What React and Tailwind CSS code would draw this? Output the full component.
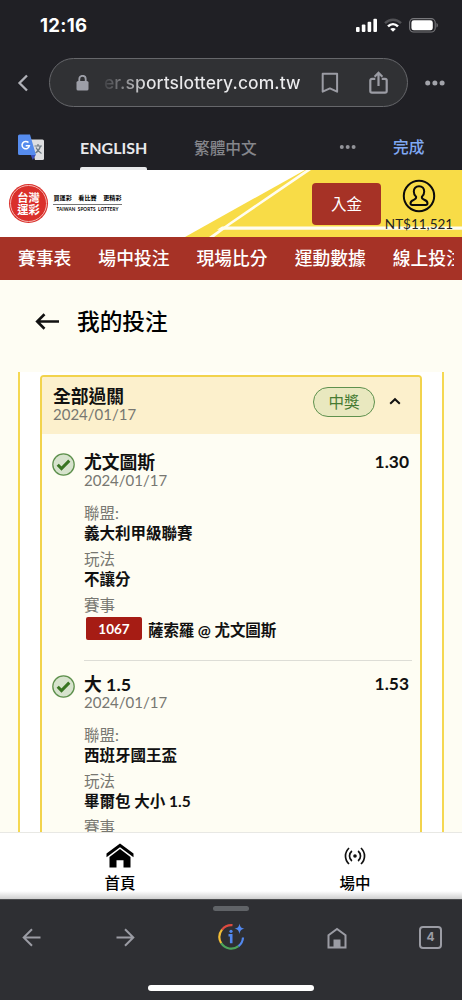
const navItems = ["賽事表", "場中投注", "現場比分", "運動數據", "線上投注"];

const bets = [
  {
    pick: "尤文圖斯",
    odds: "1.30",
    date: "2024/01/17",
    league: "義大利甲級聯賽",
    market: "不讓分",
    code: "1067",
    match: "薩索羅 @ 尤文圖斯",
  },
  {
    pick: "大 1.5",
    odds: "1.53",
    date: "2024/01/17",
    league: "西班牙國王盃",
    market: "畢爾包 大小 1.5",
  },
];

const StatusBar = () => (
  <div className="flex h-[58px] items-start justify-between pl-[40px] pr-[23px] font-['Inter']">
    <div className="mt-[13px] text-[18.5px] font-bold leading-[24px] tracking-[0.3px] text-white">
      12:16
    </div>
    <div className="mt-[18px] flex items-start">
      <svg width="22" height="15" viewBox="0 0 22 15" fill="#fff">
        <rect x="0" y="9" width="3.6" height="5" rx="1" />
        <rect x="5.8" y="6.6" width="3.6" height="7.4" rx="1" />
        <rect x="11.6" y="3.8" width="3.6" height="10.2" rx="1" />
        <rect x="17.4" y="0.8" width="3.6" height="13.2" rx="1" />
      </svg>
      <svg className="ml-[6px]" width="18" height="15" viewBox="0 0 18 15" fill="none">
        <path d="M1 5.2C5.6.5 12.4.5 17 5.2" stroke="#515155" strokeWidth="2.4" />
        <path d="M4 8.4c3-3 7-3 10 0" stroke="#fff" strokeWidth="2.5" />
        <path d="M9 13.8 6.2 11c1.6-1.5 4-1.5 5.6 0z" fill="#fff" />
      </svg>
      <svg className="ml-[7px]" width="30" height="15" viewBox="0 0 30 15" fill="none">
        <rect x="0.6" y="0.6" width="25.6" height="13.4" rx="4" stroke="#77777b" strokeWidth="1.1" />
        <rect x="2.4" y="2.3" width="21.4" height="10" rx="2.4" fill="#fff" />
        <path d="M27.5 5v4.6c1.8-.7 1.8-3.9 0-4.6z" fill="#77777b" />
      </svg>
    </div>
  </div>
);

const AddressBar = () => (
  <div className="flex h-[49px] items-center">
    <svg className="ml-[17px]" width="13" height="18" viewBox="0 0 13 18" fill="none">
      <path d="M10 1.5 2.5 9 10 16.5" stroke="#b0b1b8" strokeWidth="2.3" />
    </svg>
    <div className="ml-[19px] flex h-[49px] w-[359px] items-center rounded-full border border-[#66676b] bg-[#303134]">
      <svg className="ml-[26px]" width="13" height="16" viewBox="0 0 13 16" fill="none">
        <rect x="0.5" y="6" width="12" height="9.5" rx="1.6" fill="#9d9fa8" />
        <path d="M3.3 7V4a3.2 3.2 0 0 1 6.4 0v3" stroke="#9d9fa8" strokeWidth="1.8" />
      </svg>
      <div className="ml-[15px] w-[199px] overflow-hidden whitespace-nowrap bg-linear-to-r from-[#404145] via-[#e8e8ea] via-22% to-[#ededef] bg-clip-text font-['Inter'] text-[17.5px] font-medium leading-[24px] tracking-[0.08px] text-transparent">
        er.sportslottery.com.tw
      </div>
      <svg className="ml-[18px]" width="18" height="22" viewBox="0 0 18 22" fill="none">
        <path d="M1.7 1.7h14.4v18L8.9 16.4 1.7 19.7z" stroke="#9b9ca4" strokeWidth="2" strokeLinejoin="round" />
      </svg>
      <svg className="ml-[30px]" width="19" height="23" viewBox="0 0 19 23" fill="none" stroke="#9b9ca4" strokeWidth="2.2">
        <path d="M6.3 7.9H3A1.7 1.7 0 0 0 1.3 9.6V20A1.7 1.7 0 0 0 3 21.7h13a1.7 1.7 0 0 0 1.7-1.7V9.6A1.7 1.7 0 0 0 16 7.9h-3.3" />
        <path d="M9.5 15V2M5.6 5.7 9.5 1.8l3.9 3.9" />
      </svg>
    </div>
    <svg className="ml-[17px]" width="20" height="6" viewBox="0 0 20 6" fill="#a2a3aa">
      <circle cx="2.7" cy="3" r="2.5" />
      <circle cx="9.9" cy="3" r="2.5" />
      <circle cx="17.1" cy="3" r="2.5" />
    </svg>
  </div>
);

const TranslateBar = () => (
  <div className="flex h-[63px]">
    <svg className="ml-[18px] mt-[27px]" width="27" height="27" viewBox="0 0 27 27">
      <path d="M12 5.5h12.5A1.5 1.5 0 0 1 26 7v17.5a1.5 1.5 0 0 1-1.5 1.5H17z" fill="#dedfe1" />
      <path d="M12.5 20.5H18L14.8 26z" fill="#3b50bd" />
      <path d="M1.5.5H12l6 20.5H1.5A1.5 1.5 0 0 1 0 19.5V2A1.5 1.5 0 0 1 1.5.5z" fill="#568cee" />
      <path d="M10.5 8.6a3.7 3.7 0 1 0 .9 3.1H7.7" fill="none" stroke="#fff" strokeWidth="1.5" />
      <path d="M16.5 12h7.5M20 10v2M22.5 12c-.7 3-2.7 5.5-5 7M18 13.5c1 2.5 3 4.5 5.5 6" fill="none" stroke="#6e7b83" strokeWidth="1.2" />
    </svg>
    <div className="ml-[35px] flex w-[67px] flex-col justify-between">
      <div className="mt-[29px] whitespace-nowrap font-['Lato'] text-[16px] font-bold leading-[24px] text-[#e8e9eb]">
        ENGLISH
      </div>
      <div className="h-[3px] rounded-t-[2px] bg-[#e8e9eb]" />
    </div>
    <div className="ml-[47px] mt-[29px] w-[64px] whitespace-nowrap text-[15.7px] font-medium leading-[24px] text-[#85868b]">
      繁體中文
    </div>
    <svg className="ml-[81px] mt-[37px]" width="17" height="6" viewBox="0 0 17 6" fill="#929399">
      <circle cx="2.8" cy="3" r="2" />
      <circle cx="8.7" cy="3" r="2" />
      <circle cx="14.6" cy="3" r="2" />
    </svg>
    <div className="ml-[37px] mt-[28px] text-[15.7px] font-medium leading-[24px] text-[#80a9f4]">
      完成
    </div>
  </div>
);

const SiteHeader = () => (
  <header className="relative flex h-[67px] bg-white">
    {/* Yellow corner with thin white stripes */}
    <svg className="absolute right-0 top-0" width="282" height="67" viewBox="180 0 282 67">
      <path d="M185 67 305 0h157v67z" fill="#f8dc47" />
      <path d="M209 67 231 51.5 306 0h5L231 54.5 214 67z" fill="#fffdf0" />
      <path d="M222 56.5h240v3.3H217z" fill="#fffdf0" />
    </svg>

    <div className="relative ml-[9px] mt-[14px] flex size-[39px] shrink-0 items-center justify-center rounded-full bg-[#da302b]">
      <div className="flex size-[37px] flex-col items-center justify-center rounded-full border border-[#f5b5b0] pt-[1px] text-[11.3px] font-bold text-white">
        <span className="h-[12px] leading-[12px]">台灣</span>
        <span className="h-[12px] leading-[12px]">運彩</span>
      </div>
    </div>
    <div className="relative ml-[5px] mt-[22px] w-[69px] text-center text-black">
      <div className="flex justify-between px-[0.5px] text-[6.1px] font-bold leading-[12px]">
        <span>買運彩</span>
        <span>看比賽</span>
        <span>更精彩</span>
      </div>
      <div className="h-px bg-[#777]" />
      <div className="whitespace-nowrap font-['Lato'] text-[4.6px] font-bold leading-[9px] tracking-[0.1px]">
        TAIWAN&nbsp; SPORTS&nbsp; LOTTERY
      </div>
    </div>

    <button className="relative ml-[190px] mt-[13px] h-[42px] w-[69px] rounded-[4px] bg-[#a63226] text-[15.5px] leading-[42px] text-white">
      入金
    </button>
    <div className="relative ml-[4px] flex w-[68px] flex-col items-center">
      <svg className="mt-[9px] shrink-0" width="34" height="34" viewBox="0 0 34 34" fill="none" stroke="#0b0b0b">
        <circle cx="17" cy="17" r="15.2" strokeWidth="2" />
        <path
          d="M17 7.2c-3.3 0-5.2 2.3-5.2 5.3 0 2.2 1 4.2 2.3 5.3.4 1.8-.6 2.3-2.3 3-2 .8-3.3 2-3.3 3.4 0 1.1.7 1.7 1.8 1.7h13.4c1.1 0 1.8-.6 1.8-1.7 0-1.4-1.3-2.6-3.3-3.4-1.7-.7-2.7-1.2-2.3-3 1.3-1.1 2.3-3.1 2.3-5.3 0-3-1.9-5.3-5.2-5.3z"
          strokeWidth="2"
        />
      </svg>
      <div className="mt-[1px] whitespace-nowrap font-['Lato'] text-[13.5px] leading-[20px] text-[#222]">NT$11,521</div>
    </div>
  </header>
);

const MainNav = () => (
  <nav className="h-[43px] bg-[#a63226] pl-[18px] text-[17.8px] font-medium leading-[42px] text-white">
    <div className="flex w-[436px] gap-[27px] overflow-hidden whitespace-nowrap">
      {navItems.map((item) => (
        <span key={item} className="shrink-0">
          {item}
        </span>
      ))}
    </div>
  </nav>
);

const Field = ({ label, value }) => (
  <div className="mb-[8px] text-[15.5px]">
    <div className="h-[18px] leading-[17px] text-[#777771]">{label}</div>
    <div className="h-[20px] font-bold leading-[20px] text-[#111]">{value}</div>
  </div>
);

const BetItem = ({ bet }) => (
  <div className="flex pl-[10px] pr-[8px]">
    <svg className="mt-[1px] shrink-0" width="23" height="23" viewBox="0 0 23 23" fill="none">
      <circle cx="11.5" cy="11.5" r="10.7" fill="#d7e3cd" stroke="#5f914e" strokeWidth="1.3" />
      <path d="m5.7 11.7 3.8 3.9 7.8-8" stroke="#397522" strokeWidth="3" />
    </svg>
    <div className="ml-[9px] flex-1">
      <div className="flex h-[20px] justify-between pr-[3px] text-[17.8px] font-bold text-[#111]">
        <span className="leading-[20px]">{bet.pick}</span>
        <span className="text-[17.4px] leading-[19px]">{bet.odds}</span>
      </div>
      <div className="h-[18px] text-[15px] leading-[16px] text-[#777771]">{bet.date}</div>
      <div className="mt-[15px]">
        <Field label="聯盟:" value={bet.league} />
        <Field label="玩法" value={bet.market} />
        <div className="h-[18px] text-[15.5px] leading-[17px] text-[#777771]">賽事</div>
      </div>
      {bet.match && (
        <>
          <div className="mt-[2px] flex h-[23px] items-start">
            <span className="ml-[2px] h-[23px] w-[56px] rounded-[2px] bg-[#a61c14] text-center text-[13.5px] font-bold leading-[24px] text-white">
              {bet.code}
            </span>
            <span className="ml-[6px] text-[15.5px] font-bold leading-[26px] tracking-[-0.1px] text-[#111]">
              {bet.match}
            </span>
          </div>
          <div className="mb-[13px] mt-[20px] h-px bg-[#ddddd6]" />
        </>
      )}
    </div>
  </div>
);

const BetSlip = () => (
  <section className="mx-[18px] h-[460px] overflow-hidden border-x-2 border-[#f5d852] bg-white px-[20px] pt-[3px]">
    <div className="h-[600px] overflow-hidden rounded-[4px] border-2 border-[#f2d34c] bg-[#fefdf3]">
      <div className="mb-[18px] flex h-[57px] items-start bg-[#fcf0cc]">
        <div className="ml-[11px] mt-[9px] flex-1">
          <div className="text-[17.8px] font-bold leading-[20px] text-[#111]">全部過關</div>
          <div className="text-[15px] leading-[17px] text-[#777771]">2024/01/17</div>
        </div>
        <div className="mt-[10px] h-[30px] w-[62px] rounded-full border border-[#5f914e] bg-[#e9e8bf] text-center text-[15.5px] leading-[29px] text-[#467b32]">
          中獎
        </div>
        <svg className="ml-[14px] mr-[19px] mt-[20px]" width="12" height="8" viewBox="0 0 12 8" fill="none">
          <path d="m1.2 6.7 4.8-4.5 4.8 4.5" stroke="#111" strokeWidth="2" />
        </svg>
      </div>
      {bets.map((bet) => (
        <BetItem key={bet.pick} bet={bet} />
      ))}
    </div>
  </section>
);

const TabBar = () => (
  <div className="flex h-[67px] border-t border-[#e8e8e4] bg-linear-to-b from-white from-88% to-[#cfcfcf] text-[15.5px] font-medium text-black">
    <div className="flex w-[240px] shrink-0 flex-col items-center">
      <svg className="mt-[10px]" width="28" height="25" viewBox="0 0 28 25">
        <path d="M14 .5 27.5 10.5v3.7L14 4.3.5 14.2v-3.7z" fill="#000" />
        <path d="M14 6 24.5 14V24.5h-7v-7.3h-7v7.3h-7V14z" fill="#000" />
      </svg>
      <span className="mt-[4px] leading-[22px]">首頁</span>
    </div>
    <div className="ml-[8px] flex w-[214px] flex-col items-center">
      <svg className="mt-[14px]" width="22" height="18" viewBox="0 0 22 18" fill="none" stroke="#111" strokeWidth="1.7">
        <path d="M5 1C.3 5.5.3 12.5 5 17M17 1c4.7 4.5 4.7 11.5 0 16M7.9 4C4.7 6.7 4.7 11.3 7.9 14M14.1 4c3.2 2.7 3.2 7.3 0 10" />
        <circle cx="11" cy="9" r="1.8" fill="#111" stroke="none" />
      </svg>
      <span className="mt-[7px] leading-[22px]">場中</span>
    </div>
  </div>
);

const BrowserToolbar = () => (
  <div className="flex h-[101px] flex-col items-center border-t border-[#4b4c4e] bg-[#2e2f33]">
    <div className="mt-[6px] h-[5px] w-[36px] rounded-full bg-[#606367]" />
    <div className="mt-[12px] flex h-[28px] w-full items-center pl-[22px] text-[#9b9ca4]">
      <svg width="19" height="19" viewBox="0 0 19 19" fill="none" stroke="currentColor" strokeWidth="2">
        <path d="M18.5 9.500H2M10 1.200 1.700 9.500 10 17.800" />
      </svg>
      <svg className="ml-[75px]" width="19" height="19" viewBox="0 0 19 19" fill="none" stroke="currentColor" strokeWidth="2">
        <path d="M.5 9.500H17M9 1.200l8.300 8.300L9 17.800" />
      </svg>
      <svg className="ml-[83px]" width="28" height="28" viewBox="0 0 28 28" fill="none" strokeWidth="2.2">
        <path d="M4 6.700A12 12 0 0 1 14.500 2.200" stroke="#dd4b40" />
        <path d="M4 6.700a12 12 0 0 0-.8 13.500" stroke="#f2bd36" />
        <path d="M3.200 20.200a12 12 0 0 0 17.300 3" stroke="#4da55b" />
        <path d="M20.500 23.200A12 12 0 0 0 25 14.500" stroke="#5288ee" />
        <path d="M10.500 12.300h2.700v8" stroke="#5288ee" strokeWidth="2.6" />
        <circle cx="13" cy="8.300" r="1.6" fill="#5288ee" />
        <path d="M21.500.5c.7 3.500 1.600 4.500 5 5.200-3.400.7-4.300 1.700-5 5.200-.7-3.500-1.600-4.500-5-5.200 3.400-.7 4.300-1.700 5-5.200z" fill="#5288ee" />
      </svg>
      <svg className="ml-[81px] mt-[1px]" width="20" height="22" viewBox="0 0 20 22" fill="none">
        <path d="M1.500 8.200 10 2l8.500 6.200v12.300h-17z" stroke="currentColor" strokeWidth="2" />
        <path d="M6.500 12.500h7v8h-7z" fill="currentColor" />
      </svg>
      <div className="ml-[72px] flex size-[23px] items-center justify-center rounded-[4px] border-2 border-[#9b9ca4] font-['Inter'] text-[12px] font-bold leading-none">
        4
      </div>
    </div>
    <div className="mt-[34px] h-[6px] w-[166px] rounded-full bg-white" />
  </div>
);

const App = () => {
  return (
    <div className="flex h-[1000px] w-[462px] flex-col overflow-hidden bg-[#fefdf3] font-['Lato','Noto_Sans_CJK_TC',sans-serif]">
      <div className="h-[170px] shrink-0 bg-[#202025]">
        <StatusBar />
        <AddressBar />
        <TranslateBar />
      </div>
      <SiteHeader />
      <MainNav />
      <div className="flex h-[92px] shrink-0 items-start">
        <svg className="ml-[35px] mt-[33px]" width="25" height="17" viewBox="0 0 25 17" fill="none">
          <path d="M24 8.500H2.500M9.500 1.300 2.200 8.500l7.300 7.200" stroke="#111" strokeWidth="2.6" />
        </svg>
        <h1 className="ml-[17px] mt-[27px] text-[22.7px] font-medium leading-[30px] text-black">我的投注</h1>
      </div>
      <BetSlip />
      <TabBar />
      <BrowserToolbar />
    </div>
  );
};

export default App;
